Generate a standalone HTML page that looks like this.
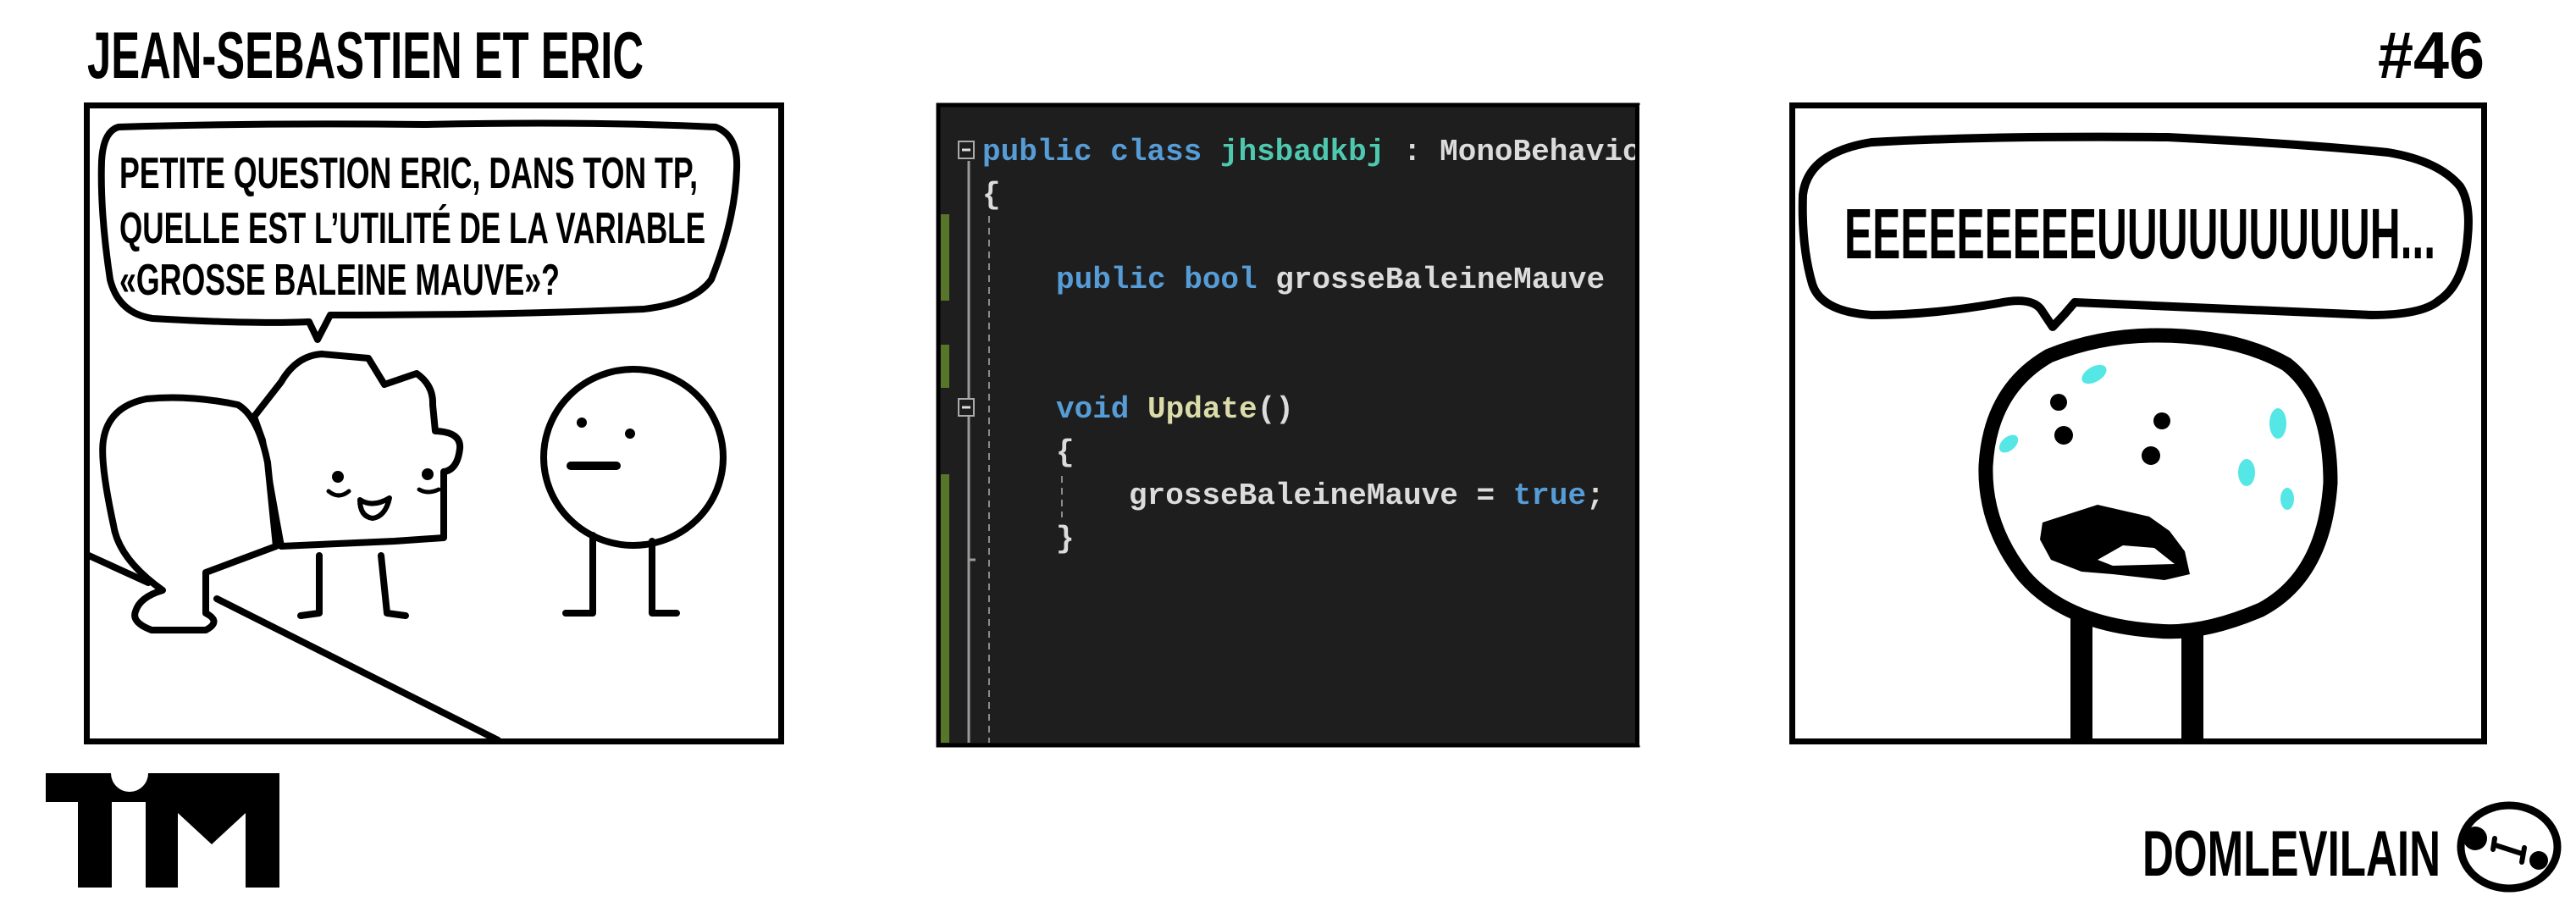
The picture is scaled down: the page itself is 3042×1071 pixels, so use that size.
<!DOCTYPE html>
<html><head><meta charset="utf-8"><style>
html,body{margin:0;padding:0;background:#fff;width:3042px;height:1071px;overflow:hidden}
svg{display:block}
.t{font-family:"Liberation Sans",sans-serif;font-weight:bold;fill:#000}
.c{font-family:"Liberation Mono",monospace;font-size:36px;font-weight:bold}
</style></head><body>
<svg width="3042" height="1071" viewBox="0 0 3042 1071" xmlns="http://www.w3.org/2000/svg">
<rect width="3042" height="1071" fill="#fff"/>
<!-- titles -->
<text class="t" x="103" y="92" font-size="78" textLength="657" lengthAdjust="spacingAndGlyphs">JEAN-SEBASTIEN ET ERIC</text>
<text class="t" x="2808" y="92" font-size="78" textLength="126" lengthAdjust="spacingAndGlyphs">#46</text>

<!-- PANEL 1 -->
<rect x="102.5" y="124.5" width="820" height="751" fill="#fff" stroke="#000" stroke-width="7"/>
<g fill="none" stroke="#000" stroke-width="8" stroke-linejoin="round" stroke-linecap="round">
<path d="M140,150 Q300,145 500,147 Q700,143 845,150 Q872,160 870,200 Q868,260 840,330 Q820,358 760,365 Q600,372 390,372 L375,401 L365,380 Q300,383 180,376 Q140,370 130,330 Q118,250 120,190 Q122,155 140,150 Z"/>
<path d="M105,656 L175,688"/>
<path d="M256,707 L588,874"/>
<path d="M300,492 L332,451 Q350,420 380,418 L435,423 L454,454 L492,441 Q512,455 511,478 L514,509 Q545,510 543,530 Q540,555 524,557 L524,635 L466,639 L332,645 Q320,580 310,520 Z" fill="#fff"/>
<path d="M192,697 Q140,660 134,620 Q118,546 122,520 Q128,480 173,471 Q224,466 281,478 Q305,492 316,546 L326,645 L243,676 L243,724 Q262,734 243,744 L179,744 Q155,735 160,722 Q165,705 192,697 Z" fill="#fff"/>
<path d="M377,656 L377,724 L355,727"/>
<path d="M450,656 L457,724 L479,727"/>
<ellipse cx="748" cy="540" rx="106" ry="104" fill="#fff"/>
<path d="M700,632 L700,724 L668,724"/>
<path d="M770,639 L770,724 L799,724"/>
<path d="M674,550 L728,550" stroke-width="10"/>
<path d="M388,580 Q400,590 412,580" stroke-width="5"/>
<path d="M495,578 Q505,584 518,578" stroke-width="5"/>
<path d="M425,590 Q440,600 460,588 Q455,610 440,612 Q425,610 425,590 Z" stroke-width="6"/>
</g>
<circle cx="399" cy="563" r="7"/><circle cx="505" cy="560" r="7"/>
<circle cx="687" cy="499" r="6"/><circle cx="744" cy="512" r="6"/>
<text class="t" x="141" y="222" font-size="52" textLength="683" lengthAdjust="spacingAndGlyphs">PETITE QUESTION ERIC, DANS TON TP,</text>
<text class="t" x="141" y="287" font-size="52" textLength="692" lengthAdjust="spacingAndGlyphs">QUELLE EST L’UTILITÉ DE LA VARIABLE</text>
<text class="t" x="141" y="348" font-size="52" textLength="520" lengthAdjust="spacingAndGlyphs">«GROSSE BALEINE MAUVE»?</text>

<!-- PANEL 2 code -->
<rect x="1108" y="124" width="826" height="756" fill="#1e1e1e" stroke="#000" stroke-width="5"/>
<rect x="1111" y="253" width="10" height="102" fill="#57762a"/>
<rect x="1111" y="407" width="10" height="51" fill="#57762a"/>
<rect x="1111" y="560" width="10" height="317" fill="#57762a"/>
<line x1="1144" y1="190" x2="1144" y2="877" stroke="#9a9a9a" stroke-width="3"/>
<line x1="1144" y1="661" x2="1152" y2="661" stroke="#9a9a9a" stroke-width="3"/>
<line x1="1168" y1="255" x2="1168" y2="877" stroke="#8a8a8a" stroke-width="2" stroke-dasharray="8,6"/>
<line x1="1254" y1="562" x2="1254" y2="611" stroke="#8a8a8a" stroke-width="2" stroke-dasharray="8,6"/>
<rect x="1132" y="167" width="18" height="20" fill="#1e1e1e" stroke="#aaa" stroke-width="2"/>
<line x1="1136" y1="177" x2="1146" y2="177" stroke="#ddd" stroke-width="3"/>
<rect x="1132" y="471" width="18" height="20" fill="#1e1e1e" stroke="#aaa" stroke-width="2"/>
<line x1="1136" y1="481" x2="1146" y2="481" stroke="#ddd" stroke-width="3"/>
<g class="c" xml:space="preserve">
<text x="1160" y="189"><tspan fill="#569cd6">public class </tspan><tspan fill="#4ec9b0">jhsbadkbj</tspan><tspan fill="#dcdcdc"> : MonoBehavio</tspan></text>
<text x="1160" y="240" fill="#dcdcdc">{</text>
<text x="1247" y="340"><tspan fill="#569cd6">public bool </tspan><tspan fill="#dcdcdc">grosseBaleineMauve</tspan></text>
<text x="1247" y="493"><tspan fill="#569cd6">void </tspan><tspan fill="#dcdcaa">Update</tspan><tspan fill="#dcdcdc">()</tspan></text>
<text x="1247" y="544" fill="#dcdcdc">{</text>
<text x="1333" y="595"><tspan fill="#dcdcdc">grosseBaleineMauve = </tspan><tspan fill="#569cd6">true</tspan><tspan fill="#dcdcdc">;</tspan></text>
<text x="1247" y="646" fill="#dcdcdc">}</text>
</g>
<rect x="1934" y="124" width="8" height="756" fill="#fff"/>
<rect x="1931" y="122" width="5" height="760" fill="#000"/>

<!-- PANEL 3 -->
<rect x="2116.5" y="124.5" width="817" height="751" fill="#fff" stroke="#000" stroke-width="7"/>
<g fill="none" stroke="#000" stroke-linejoin="round" stroke-linecap="round">
<path d="M2210,168 Q2350,160 2560,162 Q2720,170 2820,180 Q2880,190 2905,220 Q2918,240 2914,280 Q2910,335 2880,355 Q2860,372 2800,372 Q2650,365 2450,357 L2438,371 L2424,386 L2410,365 Q2398,350 2360,358 Q2280,372 2210,372 Q2150,368 2140,335 Q2127,290 2129,230 Q2135,180 2210,168 Z" stroke-width="10"/>
<line x1="2458" y1="700" x2="2458" y2="879" stroke-width="26" stroke-linecap="butt"/>
<line x1="2589" y1="700" x2="2589" y2="879" stroke-width="26" stroke-linecap="butt"/>
<path d="M2547,396 Q2640,396 2700,430 Q2752,470 2752,570 Q2745,680 2670,720 Q2600,750 2547,745 Q2440,738 2390,680 Q2343,620 2345,550 Q2350,460 2420,420 Q2480,396 2547,396 Z" fill="#fff" stroke-width="17"/>
</g>
<g fill="#000">
<circle cx="2431" cy="475" r="10"/><circle cx="2437" cy="514" r="11"/>
<circle cx="2553" cy="497" r="10"/><circle cx="2540" cy="538" r="11"/>
<path d="M2412,617 L2477,596 L2538,610 L2562,627 L2580,651 L2586,678 L2556,685 L2495,678 L2458,675 L2422,661 L2409,637 Z"/>
</g>
<path d="M2477,661 L2507,644 L2544,647 L2568,666 L2495,668 Z" fill="#fff"/>
<g fill="#55e6e6">
<ellipse cx="2473" cy="442" rx="16" ry="9" transform="rotate(-30 2473 442)"/>
<ellipse cx="2372" cy="524" rx="13" ry="8" transform="rotate(-40 2372 524)"/>
<ellipse cx="2690" cy="500" rx="10" ry="18"/>
<ellipse cx="2653" cy="558" rx="10" ry="16"/>
<ellipse cx="2701" cy="589" rx="8" ry="13"/>
</g>
<text class="t" x="2178" y="305" font-size="84" textLength="698" lengthAdjust="spacingAndGlyphs">EEEEEEEEEUUUUUUUUUH...</text>

<!-- TIM logo -->
<path d="M54,913 L330,913 L330,947 L54,947 Z M92,947 L132,947 L132,1048 L92,1048 Z" fill="#000"/>
<path d="M172,913 L330,913 L330,1048 L290,1048 L290,960 L250,997 L210,960 L210,1048 L172,1048 Z" fill="#000"/>
<circle cx="153" cy="913" r="22" fill="#fff"/>

<!-- DOMLEVILAIN -->
<text class="t" x="2530" y="1034" font-size="76" textLength="352" lengthAdjust="spacingAndGlyphs">DOMLEVILAIN</text>
<ellipse cx="2963" cy="1000" rx="57" ry="49" fill="none" stroke="#000" stroke-width="9"/>
<circle cx="2923" cy="990" r="14"/><circle cx="2998" cy="1016" r="11"/>
<path d="M2947,998 L2978,1008 M2946,990 L2944,1003 M2981,1001 L2978,1018" stroke="#000" stroke-width="6" stroke-linecap="round"/>
</svg>
</body></html>
